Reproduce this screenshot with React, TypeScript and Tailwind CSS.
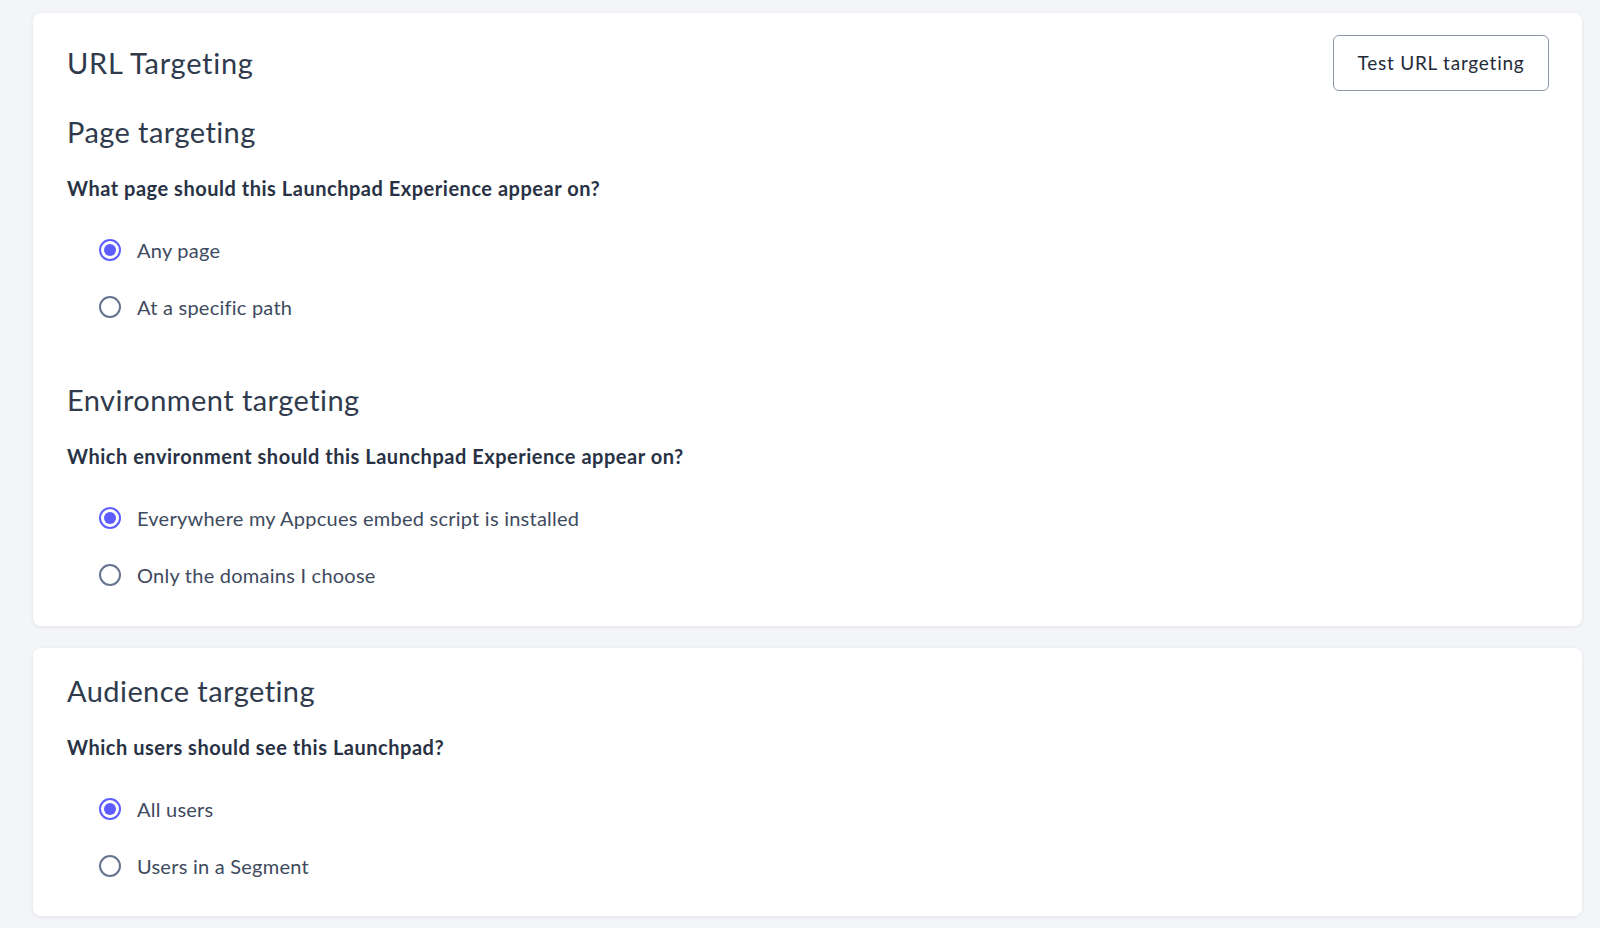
import React from "react";

type Option = { label: string; checked?: boolean };

function Radio({ label, checked }: Option) {
  return (
    <label className="flex items-center h-6 pl-8 gap-4 cursor-pointer">
      <span
        className={
          checked
            ? "w-[22px] h-[22px] rounded-full border-2 border-[#5c5cff] flex items-center justify-center flex-shrink-0"
            : "w-[22px] h-[22px] rounded-full border-2 border-[#66748f] flex-shrink-0"
        }
      >
        {checked && <span className="w-[12px] h-[12px] rounded-full bg-[#5c5cff]" />}
      </span>
      <span className="text-[20px] leading-6 tracking-[0.012em] text-[#3e4a5e]">{label}</span>
    </label>
  );
}

function Section({
  title,
  question,
  options,
  first,
}: {
  title: string;
  question: string;
  options: Option[];
  first?: boolean;
}) {
  return (
    <section className={first ? "" : "mt-[63px]"}>
      <h2 className="text-[29px] leading-9 tracking-[0.015em] text-[#2f3a4d]">{title}</h2>
      <p className="mt-6 text-[20px] leading-7 font-bold tracking-[0.026em] text-[#283244]">{question}</p>
      <div className="mt-9 flex flex-col gap-[33px]">
        {options.map((o) => (
          <Radio key={o.label} {...o} />
        ))}
      </div>
    </section>
  );
}

export default function App() {
  return (
    <div
      className="min-h-screen bg-[#f4f5f8] pl-[33px] pr-[18px] pt-[13px] pb-4 flex flex-col gap-[22px]"
      style={{ fontFamily: "Lato, 'Open Sans', sans-serif" }}
    >
      {/* URL targeting card */}
      <div className="bg-white rounded-lg shadow-[0_1px_4px_rgba(30,40,70,0.08)] pl-[34px] pr-[33px] pt-[22px] pb-[39px]">
        <div className="h-14 flex items-center justify-between">
          <h1 className="text-[29px] leading-9 tracking-[0.025em] text-[#2f3a4d]">URL Targeting</h1>
          <button className="h-14 w-[216px] rounded-md border border-[#8d97ab] bg-white text-[19px] tracking-[0.04em] text-[#232b38]">
            Test URL targeting
          </button>
        </div>
        <div className="mt-[23px]">
          <Section
            first
            title="Page targeting"
            question="What page should this Launchpad Experience appear on?"
            options={[{ label: "Any page", checked: true }, { label: "At a specific path" }]}
          />
          <Section
            title="Environment targeting"
            question="Which environment should this Launchpad Experience appear on?"
            options={[
              { label: "Everywhere my Appcues embed script is installed", checked: true },
              { label: "Only the domains I choose" },
            ]}
          />
        </div>
      </div>

      {/* Audience card */}
      <div className="bg-white rounded-lg shadow-[0_1px_4px_rgba(30,40,70,0.08)] pl-[34px] pr-[33px] pt-[25px] pb-[38px]">
        <Section
          first
          title="Audience targeting"
          question="Which users should see this Launchpad?"
          options={[{ label: "All users", checked: true }, { label: "Users in a Segment" }]}
        />
      </div>
    </div>
  );
}
